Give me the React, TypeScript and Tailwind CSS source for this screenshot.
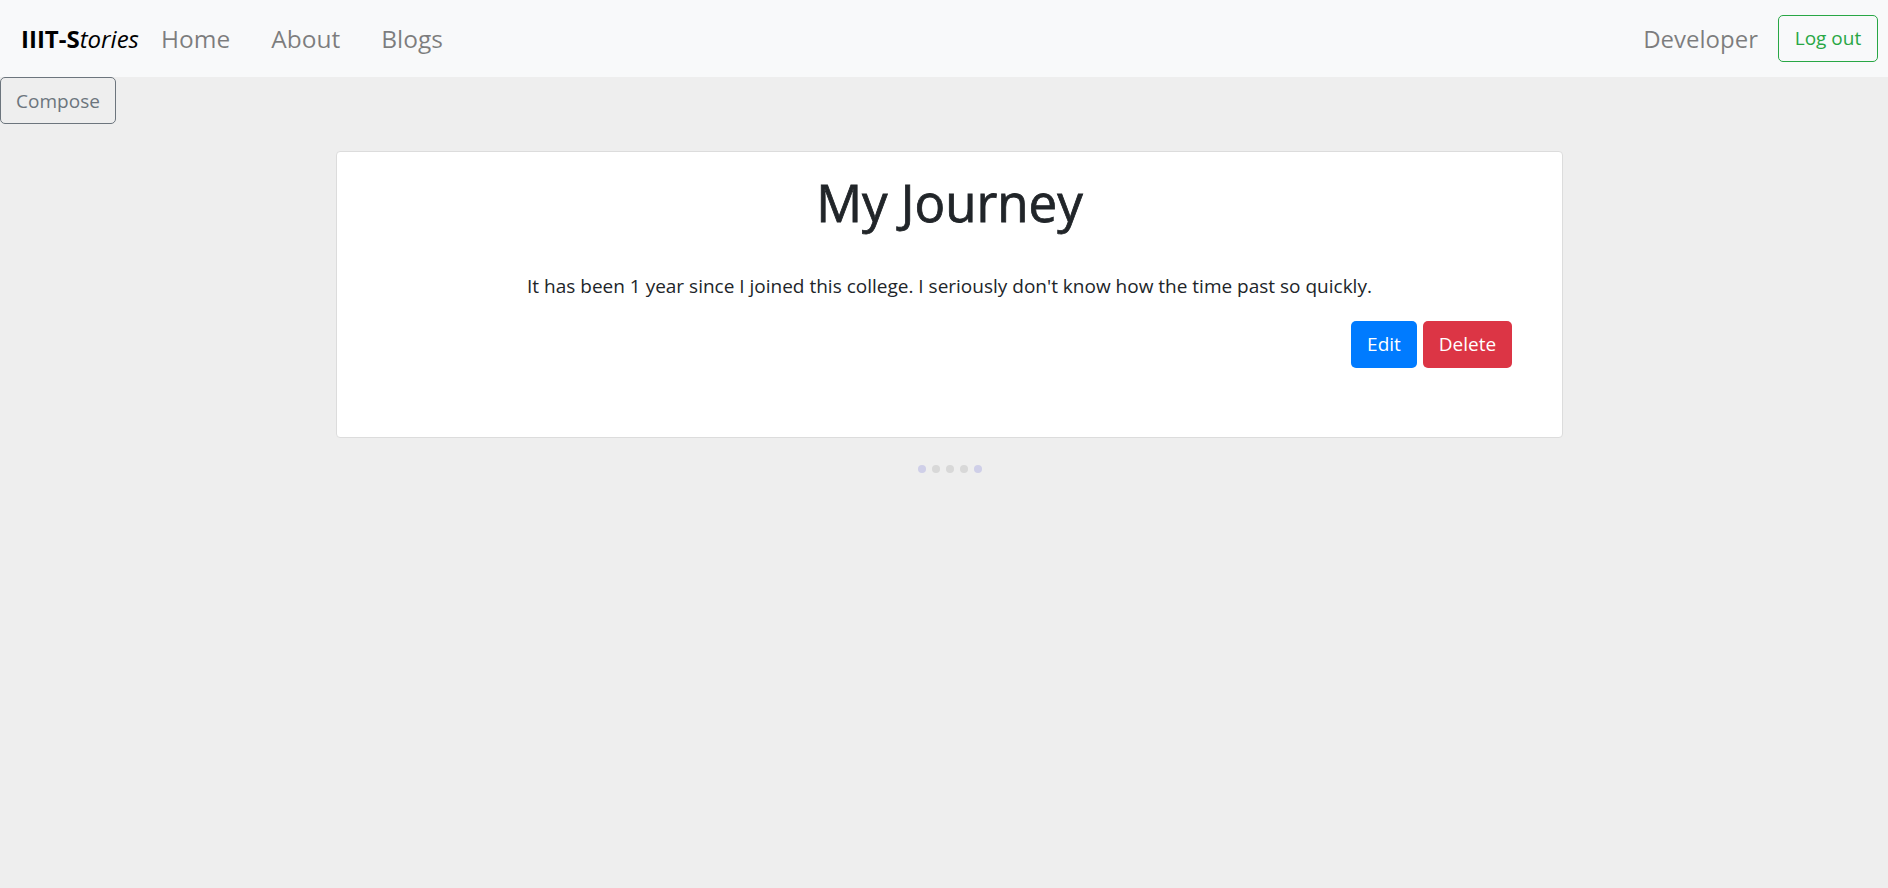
import React from "react";

export default function App() {
  const font = { fontFamily: '"Open Sans", "Noto Sans", sans-serif' };
  return (
    <div className="min-h-[888px] w-full bg-[#eeeeee]" style={font}>
      <nav className="h-[77px] bg-[#f8f9fa] flex items-center justify-between pl-[21px] pr-[10px]">
        <div className="flex items-center pt-[1px]">
          <span className="text-[24px] text-black leading-none mr-[22px]">
            <span className="font-bold">IIIT-S</span>
            <span className="italic">tories</span>
          </span>
          <div className="flex items-center gap-[41px] text-[24.5px] text-[rgba(0,0,0,0.5)]">
            <span>Home</span>
            <span>About</span>
            <span>Blogs</span>
          </div>
        </div>
        <div className="flex items-center gap-[20px]">
          <span className="text-[24px] text-[rgba(0,0,0,0.5)]">Developer</span>
          <button className="h-[47px] w-[100px] border border-[#28a745] text-[#28a745] rounded-[5px] text-[19px]">
            Log out
          </button>
        </div>
      </nav>
      <button className="h-[47px] w-[116px] border border-[#6c757d] text-[#6c757d] rounded-[5px] text-[19px] pt-[1px]">
        Compose
      </button>
      <div className="ml-[336px] w-[1227px] mt-[27px] h-[287px] bg-white border border-[#dcdcdc] rounded-[4px] flex flex-col items-center pt-[20px]">
        <h1 className="text-[51px] leading-[1.2] text-[#212529] font-normal [-webkit-text-stroke:0.8px_#212529]">My Journey</h1>
        <p className="mt-[39px] text-[19px] leading-[28px] text-[#212529]">
          It has been 1 year since I joined this college. I seriously don't know how the time past so quickly.
        </p>
        <div className="self-end mr-[50px] mt-[21px] flex gap-[6px]">
          <button className="h-[47px] w-[66px] bg-[#007bff] text-white rounded-[5px] text-[19px]">Edit</button>
          <button className="h-[47px] w-[89px] bg-[#dc3545] text-white rounded-[5px] text-[19px]">Delete</button>
        </div>
      </div>
      <div className="ml-[336px] w-[1227px] flex justify-center gap-[6px] mt-[27px]">
        <span className="w-[8px] h-[8px] rounded-full bg-[#cfcfe8]" />
        <span className="w-[8px] h-[8px] rounded-full bg-[#d8d8d8]" />
        <span className="w-[8px] h-[8px] rounded-full bg-[#d8d8d8]" />
        <span className="w-[8px] h-[8px] rounded-full bg-[#d8d8d8]" />
        <span className="w-[8px] h-[8px] rounded-full bg-[#cfcfe8]" />
      </div>
    </div>
  );
}
